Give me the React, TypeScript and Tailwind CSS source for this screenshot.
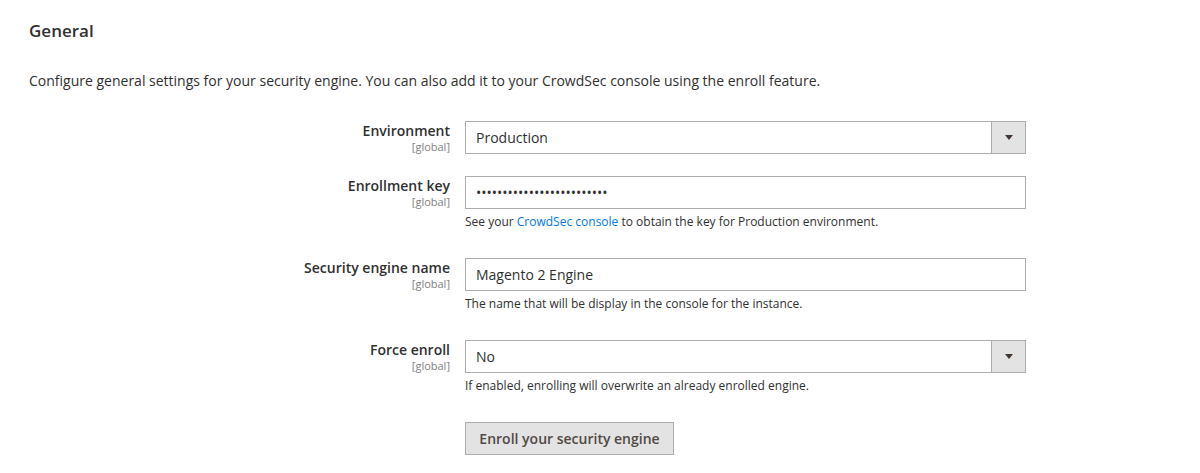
// General settings block of the CrowdSec security engine config page.

const FONT = { fontFamily: '"Open Sans", "Liberation Sans", sans-serif' };

function Caret() {
  return (
    <svg width="8" height="5" viewBox="0 0 8 5" aria-hidden="true">
      <path d="M0 0h8L4 5z" fill="#41362f" />
    </svg>
  );
}

function FieldLabel({ text }: { text: string }) {
  return (
    <div className="flex flex-col items-end pt-[1px]">
      <span className="text-[14px] font-semibold leading-[18px] text-[#303030]">{text}</span>
      <span className="text-[11px] leading-[14px] text-[#808080]">[global]</span>
    </div>
  );
}

function Select({ value }: { value: string }) {
  return (
    <div className="flex h-[33px] w-[561px] border border-[#adadad] bg-white">
      <div className="flex flex-1 items-center pl-[10px] text-[14px] text-[#303030]">{value}</div>
      <div className="flex w-[34px] items-center justify-center border-l border-[#adadad] bg-[#e3e3e3]">
        <Caret />
      </div>
    </div>
  );
}

function TextBox({ value }: { value: string }) {
  return (
    <div className="flex h-[33px] w-[561px] items-center border border-[#adadad] bg-white pl-[10px] text-[14px] text-[#303030]">
      <span>{value}</span>
    </div>
  );
}

function Row({
  label,
  children,
  note,
}: {
  label: string;
  children: React.ReactNode;
  note?: React.ReactNode;
}) {
  return (
    <div className="grid grid-cols-[421px_561px] items-start gap-x-[15px]">
      <FieldLabel text={label} />
      <div>
        {children}
        {note && (
          <p className="mt-[4px] mb-[5px] text-[12px] leading-[18px] text-[#303030]">{note}</p>
        )}
      </div>
    </div>
  );
}

export default function App() {
  return (
    <div className="min-h-[473px] w-[1200px] bg-white pl-[29px] pt-[19px]" style={FONT}>
      <h2 className="text-[17px] font-semibold leading-[23px] text-[#303030]">General</h2>
      <p className="mt-[29px] text-[14px] leading-[20px] text-[#303030]">
        Configure general settings for your security engine. You can also add it to your CrowdSec
        console using the enroll feature.
      </p>

      <div className="mt-[30px] flex flex-col gap-[22px]">
        <Row label="Environment">
          <Select value="Production" />
        </Row>
        <Row
          label="Enrollment key"
          note={
            <>
              See your <span className="text-[#007bdb]">CrowdSec console</span> to obtain the key
              for Production environment.
            </>
          }
        >
          <TextBox value={"•".repeat(25)} />
        </Row>
        <Row label="Security engine name" note="The name that will be display in the console for the instance.">
          <TextBox value="Magento 2 Engine" />
        </Row>
        <Row label="Force enroll" note="If enabled, enrolling will overwrite an already enrolled engine.">
          <Select value="No" />
        </Row>
        <div className="grid grid-cols-[421px_561px] gap-x-[15px]">
          <div />
          <div>
            <button
              type="button"
              className="h-[33px] w-[209px] border border-[#adadad] bg-[#e3e3e3] text-[14px] font-semibold text-[#514943]"
            >
              Enroll your security engine
            </button>
          </div>
        </div>
      </div>
    </div>
  );
}
